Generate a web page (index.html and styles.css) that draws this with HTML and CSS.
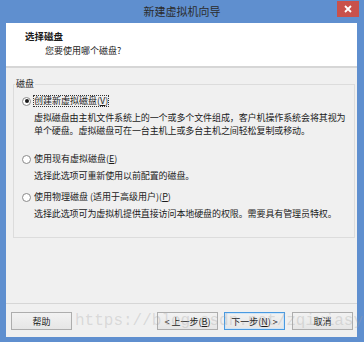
FILE: index.html
```html
<!DOCTYPE html>
<html lang="zh-CN">
<head>
<meta charset="utf-8">
<title>新建虚拟机向导</title>
<link rel="stylesheet" href="styles.css">
</head>
<body>
<div class="window">
  <div class="titlebar">
    <span></span>
    <span class="title">新建虚拟机向导</span>
    <span class="close">
      <svg width="8" height="8" viewBox="0 0 8 8"><path d="M1 1L7 7M7 1L1 7" stroke="#fff" stroke-width="1.8"/></svg>
    </span>
  </div>
  <div class="client">
    <div class="header">
      <div class="h-title">选择磁盘</div>
      <div class="h-sub">您要使用哪个磁盘?</div>
    </div>
    <div class="main">
      <fieldset class="group">
        <legend>磁盘</legend>
        <div class="opt">
          <span class="radio checked"></span>
          <span class="label focus">创建新虚拟磁盘(<u>V</u>)</span>
        </div>
        <div class="desc">虚拟磁盘由主机文件系统上的一个或多个文件组成，客户机操作系统会将其视为<br>单个硬盘。虚拟磁盘可在一台主机上或多台主机之间轻松复制或移动。</div>
        <div class="opt opt2">
          <span class="radio"></span>
          <span class="label">使用现有虚拟磁盘(<u>E</u>)</span>
        </div>
        <div class="desc">选择此选项可重新使用以前配置的磁盘。</div>
        <div class="opt opt3">
          <span class="radio"></span>
          <span class="label">使用物理磁盘 (适用于高级用户)(<u>P</u>)</span>
        </div>
        <div class="desc">选择此选项可为虚拟机提供直接访问本地硬盘的权限。需要具有管理员特权。</div>
      </fieldset>
    </div>
    <div class="footer">
      <button class="btn">帮助</button>
      <span class="spacer"></span>
      <button class="btn">&lt; 上一步(<u>B</u>)</button>
      <button class="btn default">下一步(<u>N</u>) &gt;</button>
      <button class="btn cancel">取消</button>
    </div>
  </div>
  <div class="watermark">https://blog.csdn.net/zqixiasy</div>
</div>
</body>
</html>
```
FILE: styles.css
```css
html, body {
  margin: 0;
  padding: 0;
}
body {
  width: 364px;
  height: 342px;
  overflow: hidden;
  font-family: "Noto Sans CJK SC", "Noto Sans", sans-serif;
  font-size: 9px;
  color: #1a1a1a;
}
.window {
  position: relative;
  width: 364px;
  height: 342px;
  background: #5f8fcf;
  display: flex;
  flex-direction: column;
}
.titlebar {
  height: 23px;
  display: grid;
  grid-template-columns: 1fr auto 1fr;
  align-items: start;
}
.title {
  font-size: 11px;
  line-height: 23px;
  color: #2b2b2b;
}
.close {
  justify-self: end;
  width: 22px;
  height: 16px;
  margin-top: 1px;
  margin-right: 5px;
  background: #c9514b;
  display: flex;
  align-items: center;
  justify-content: center;
}
.client {
  flex: 1;
  margin: 0 7px 5px 6px;
  background: #f0f0f0;
  display: flex;
  flex-direction: column;
}
.header {
  height: 43px;
  background: #fff;
  border-bottom: 2px solid #d6d6d6;
  box-sizing: content-box;
}
.h-title {
  font-weight: bold;
  font-size: 9.5px;
  line-height: 12px;
  padding: 7px 0 0 19px;
}
.h-sub {
  line-height: 12px;
  padding: 3px 0 0 39px;
  color: #222;
}
.main {
  flex: 1;
  padding: 10px 7px 0 7px;
}
.group {
  margin: 0;
  border: 1px solid #dcdcdc;
  padding: 5px 8px 17px 8px;
}
.group legend {
  padding: 0 1px;
  margin-left: -7px;
  line-height: 12px;
}
.opt {
  display: flex;
  align-items: center;
  gap: 2px;
  height: 12px;
}
.opt2 { margin-top: 16px; }
.opt3 { margin-top: 9px; }
.radio {
  width: 7px;
  height: 7px;
  border: 1px solid #8a8a8a;
  border-radius: 50%;
  background: #fff;
  display: flex;
  align-items: center;
  justify-content: center;
}
.radio.checked::after {
  content: "";
  width: 4px;
  height: 4px;
  border-radius: 50%;
  background: #1a1a1a;
}
.label {
  line-height: 12px;
  padding: 0 1px;
}
.label.focus {
  outline: 1px dotted #333;
  outline-offset: -1px;
}
.desc {
  padding-left: 12px;
  margin-top: 4px;
  line-height: 13px;
  letter-spacing: -0.1px;
  white-space: nowrap;
}
.footer {
  border-top: 1px solid #d6d6d6;
  padding: 8px 4px 7px 5px;
  display: flex;
  align-items: center;
}
.spacer { flex: 1; }
.btn {
  width: 61px;
  height: 18px;
  margin: 0;
  padding: 0;
  font-family: inherit;
  font-size: 9px;
  color: #1a1a1a;
  border: 1px solid #adadad;
  background: linear-gradient(#f2f2f2, #e6e6e6);
}
.btn + .btn { margin-left: 6px; }
.btn.cancel { margin-left: 7px; }
.btn.default {
  border-color: #4a9ae0;
  box-shadow: inset 0 0 0 1px #cfe5f8;
}
.watermark {
  position: absolute;
  left: 75px;
  top: 311px;
  font-family: "Liberation Mono", monospace;
  font-size: 16px;
  line-height: 20px;
  color: rgba(160, 160, 160, 0.3);
  pointer-events: none;
  white-space: nowrap;
}
```
